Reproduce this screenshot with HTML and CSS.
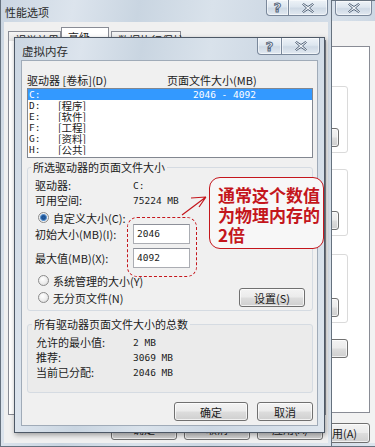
FILE: index.html
```html
<!DOCTYPE html>
<html lang="zh-CN">
<head>
<meta charset="utf-8">
<title>虚拟内存</title>
<link rel="stylesheet" href="styles.css">
</head>
<body>
<div class="screen">

  <section class="win win-sys">
    <div class="caption">
      <div class="cap-btns">
        <span class="cap-btn cap-close solo"><svg class="xg" width="12" height="10" viewBox="0 0 12 10"><path d="M0.5 1.5 L1.5 0.5 L6 3.5 L10.5 0.5 L11.5 1.5 L7.5 5 L11.5 8.5 L10.5 9.5 L6 6.5 L1.5 9.5 L0.5 8.5 L4.5 5 Z"/></svg></span>
      </div>
    </div>
    <div class="client sys-client">
      <div class="sys-panel">
        <div class="sys-group g1"><span class="btn b-set">设置(S)...</span></div>
        <div class="sys-group g2"><span class="btn b-set">设置(E)...</span></div>
        <div class="sys-group g3"><span class="btn b-set">设置(T)...</span></div>
        <div class="sys-env"><span class="btn b-env">环境变量(N)...</span></div>
      </div>
      <div class="sys-foot"><span class="btn b-apply">应用(A)</span></div>
    </div>
  </section>

  <section class="win win-perf">
    <div class="caption">
      <span class="cap-title">性能选项</span>
      <div class="cap-btns">
        <span class="cap-btn cap-help">?</span>
        <span class="cap-btn cap-close"><svg class="xg" width="12" height="10" viewBox="0 0 12 10"><path d="M0.5 1.5 L1.5 0.5 L6 3.5 L10.5 0.5 L11.5 1.5 L7.5 5 L11.5 8.5 L10.5 9.5 L6 6.5 L1.5 9.5 L0.5 8.5 L4.5 5 Z"/></svg></span>
      </div>
    </div>
    <div class="client perf-client">
      <div class="tabs">
        <span class="tab t1">视觉效果</span>
        <span class="tab t2 active">高级</span>
        <span class="tab t3">数据执行保护</span>
      </div>
      <div class="perf-panel"></div>
      <div class="perf-foot">
        <span class="btn b-perf">确定</span>
        <span class="btn b-perf">取消</span>
        <span class="btn b-perf">应用(A)</span>
      </div>
    </div>
  </section>

  <section class="win win-vm">
    <div class="caption">
      <span class="cap-title">虚拟内存</span>
      <div class="cap-btns">
        <span class="cap-btn cap-help">?</span>
        <span class="cap-btn cap-close"><svg class="xg" width="12" height="10" viewBox="0 0 12 10"><path d="M0.5 1.5 L1.5 0.5 L6 3.5 L10.5 0.5 L11.5 1.5 L7.5 5 L11.5 8.5 L10.5 9.5 L6 6.5 L1.5 9.5 L0.5 8.5 L4.5 5 Z"/></svg></span>
      </div>
    </div>
    <div class="client vm-client">
      <div class="list-head"><span class="lh1">驱动器 [卷标](D)</span><span>页面文件大小(MB)</span></div>
      <div class="drive-list">
        <div class="drive sel"><span class="d-letter num">C:</span><span class="d-label"></span><span class="d-size num">2046 - 4092</span></div>
        <div class="drive"><span class="d-letter num">D:</span><span class="d-label">[程序]</span><span class="d-size"></span></div>
        <div class="drive"><span class="d-letter num">E:</span><span class="d-label">[软件]</span><span class="d-size"></span></div>
        <div class="drive"><span class="d-letter num">F:</span><span class="d-label">[工程]</span><span class="d-size"></span></div>
        <div class="drive"><span class="d-letter num">G:</span><span class="d-label">[资料]</span><span class="d-size"></span></div>
        <div class="drive"><span class="d-letter num">H:</span><span class="d-label">[公共]</span><span class="d-size"></span></div>
      </div>

      <div class="group g-sel">
        <div class="group-title">所选驱动器的页面文件大小</div>
        <div class="kv info i1"><span class="k">驱动器:</span><span class="v num">C:</span></div>
        <div class="kv info i2"><span class="k">可用空间:</span><span class="v num">75224 MB</span></div>
        <div class="radio-row rr1"><span class="radio on"></span><span>自定义大小(C):</span></div>
        <div class="kv field f1"><span class="k">初始大小(MB)(I):</span><span class="input num">2046</span></div>
        <div class="kv field f2"><span class="k">最大值(MB)(X):</span><span class="input num">4092</span></div>
        <div class="radio-row rr2"><span class="radio"></span><span>系统管理的大小(Y)</span></div>
        <div class="radio-row rr3">
          <div class="radio-label"><span class="radio"></span><span>无分页文件(N)</span></div>
          <span class="btn b-set2">设置(S)</span>
        </div>
      </div>

      <div class="group g-total">
        <div class="group-title">所有驱动器页面文件大小的总数</div>
        <div class="kv tot t-first"><span class="k">允许的最小值:</span><span class="v num">2 MB</span></div>
        <div class="kv tot"><span class="k">推荐:</span><span class="v num">3069 MB</span></div>
        <div class="kv tot"><span class="k">当前已分配:</span><span class="v num">2046 MB</span></div>
      </div>

      <div class="vm-foot">
        <span class="btn b-ok">确定</span>
        <span class="btn b-cancel">取消</span>
      </div>
    </div>
  </section>

  <div class="mark-box"></div>
  <svg class="arrow" width="34" height="30" viewBox="0 0 34 30">
    <path d="M3 25 L27 7 M27 7 L12 8 M27 7 L20 17"/>
  </svg>
  <div class="note">通常这个数值<br>为物理内存的<br>2倍</div>

</div>
</body>
</html>
```

FILE: styles.css
```css
* { box-sizing: border-box; }
html, body { margin: 0; padding: 0; }
body {
  font-family: "Noto Sans CJK SC", "Noto Sans", sans-serif;
  font-size: 11px;
  color: #1b1b1b;
  background: #cdd8e4;
}
.screen {
  position: relative;
  width: 375px;
  height: 447px;
  overflow: hidden;
}

.num {
  font-family: "DejaVu Sans Mono", "Liberation Mono", monospace;
  font-size: 9.5px;
}

/* ---------- window chrome ---------- */
.win {
  position: absolute;
  display: flex;
  flex-direction: column;
  border: 1px solid #66727f;
  background: linear-gradient(100deg, #cbd6e2 0%, #dce4ed 18%, #c9d5e1 34%, #d9e2eb 52%, #ccd7e3 70%, #dee6ee 100%);
}
.caption {
  display: flex;
  justify-content: space-between;
  align-items: flex-start;
  flex: none;
}
.cap-title {
  line-height: 13px;
  color: #2b2b2b;
  white-space: nowrap;
}
.cap-btns { display: flex; }
.cap-btn {
  display: flex;
  align-items: center;
  justify-content: center;
  border: 1px solid #7a889b;
  border-top: 0;
  background: linear-gradient(#eef3f8, #dde6ef 45%, #ced9e5 55%, #e2e9f1);
  box-shadow: inset 0 0 0 1px rgba(255, 255, 255, 0.55);
}
.cap-help {
  border-radius: 0 0 0 4px;
  font: bold 13px "DejaVu Sans", sans-serif;
  color: #f2f5f8;
  -webkit-text-stroke: 1px #56667b;
}
.cap-close { border-left: 0; border-radius: 0 0 4px 0; }
.cap-close.solo { border-left: 1px solid #7a889b; border-radius: 0 0 4px 4px; }
.xg path { fill: #eef2f6; stroke: #56667b; stroke-width: 1; }

.btn {
  display: inline-flex;
  align-items: center;
  justify-content: center;
  border: 1px solid #707070;
  border-radius: 3px;
  background: linear-gradient(#f3f3f3 0%, #ebebeb 48%, #dddddd 52%, #cfcfcf 100%);
  box-shadow: inset 0 0 0 1px rgba(255, 255, 255, 0.7);
  white-space: nowrap;
  line-height: 12px;
  flex: none;
}

/* ---------- back window (system properties) ---------- */
.win-sys { left: 200px; top: 0; width: 180px; height: 447px; }
.win-sys .caption { height: 20px; justify-content: flex-end; padding-right: 7px; }
.win-sys .cap-close { width: 37px; height: 15px; }
.sys-client {
  flex: 1;
  margin: 0 3px 3px;
  background: #f2f2f2;
  display: flex;
  flex-direction: column;
}
.sys-panel {
  margin: 25px 6px 0 4px;
  height: 367px;
  background: #fff;
  border: 1px solid #898c95;
  padding: 0 21px 0 10px;
}
.sys-group {
  display: flex;
  justify-content: flex-end;
  align-items: flex-end;
  border: 1px solid #dadada;
  border-radius: 3px;
  padding: 0 8px 5px 0;
}
.g1 { margin-top: 39px; height: 67px; }
.g2 { margin-top: 16px; height: 67px; }
.g3 { margin-top: 18px; height: 69px; }
.b-set { width: 75px; height: 19px; }
.sys-env { display: flex; justify-content: flex-end; margin-top: 16px; }
.b-env { width: 100px; height: 19px; }
.sys-foot { display: flex; justify-content: flex-end; padding-right: 6px; margin-top: 10px; }
.b-apply { width: 62px; height: 20px; }

/* ---------- performance options ---------- */
.win-perf { left: 0; top: -1px; width: 332px; height: 448px; }
.win-perf .caption { height: 22px; padding-right: 3px; }
.win-perf .cap-title { padding: 6px 0 0 4px; }
.win-perf .cap-help { width: 23px; height: 16px; }
.win-perf .cap-close { width: 39px; height: 16px; }
.perf-client {
  flex: 1;
  margin: 0 3px 3px;
  background: #f0f0f0;
  display: flex;
  flex-direction: column;
}
.tabs {
  display: flex;
  align-items: flex-end;
  height: 18px;
  padding-left: 4px;
  position: relative;
  z-index: 1;
}
.tab {
  height: 10px;
  margin-bottom: -1px;
  border: 1px solid #898c95;
  border-bottom: 0;
  background: linear-gradient(#f5f5f5, #e4e4e4);
  padding: 1px 6px 0;
  line-height: 14px;
  white-space: nowrap;
}
.t1 { width: 53px; }
.t2 { width: 48px; height: 14px; background: #fff; padding-top: 2px; }
.t3 { width: 70px; margin-left: 2px; }
.perf-panel {
  margin: 0 2px 0 4px;
  height: 375px;
  background: #fff;
  border: 1px solid #898c95;
}
.perf-foot {
  display: flex;
  justify-content: flex-end;
  gap: 7px;
  padding-right: 5px;
  margin-top: 3px;
}
.b-perf { width: 66px; height: 22px; }

/* ---------- virtual memory dialog ---------- */
.win-vm {
  left: 14px;
  top: 37px;
  width: 311px;
  height: 396px;
  border-color: #4d5866;
  box-shadow: 1px 2px 5px rgba(0, 0, 0, 0.35);
  z-index: 2;
}
.win-vm .caption { height: 22px; padding-right: 4px; }
.win-vm .cap-title { padding: 7px 0 0 7px; font-size: 11.5px; }
.win-vm .cap-help { width: 25px; height: 17px; }
.win-vm .cap-close { width: 38px; height: 17px; }
.vm-client {
  flex: 1;
  margin: 0 6px 6px;
  background: #f0f0f0;
  border: 1px solid #a0abb8;
  padding: 0 4px 0 5px;
  display: flex;
  flex-direction: column;
}
.list-head { display: flex; margin-top: 13px; height: 12px; line-height: 12px; white-space: nowrap; }
.lh1 { width: 140px; }
.drive-list {
  margin-top: 2px;
  height: 70px;
  background: #fff;
  border: 1px solid #828790;
}
.drive {
  display: flex;
  height: 11px;
  line-height: 11px;
  font-size: 10.5px;
  white-space: nowrap;
  overflow: hidden;
}
.drive.sel { background: #3399ff; color: #fff; }
.d-letter { width: 30px; padding-left: 1px; }
.d-label { width: 135px; }

.group { border: 1px solid #d5dbe2; border-radius: 3px; }
.group-title {
  width: max-content;
  margin: -7px 0 0 -4px;
  padding: 0 2px;
  line-height: 12px;
  background: #f0f0f0;
}
.g-sel { margin-top: 9px; padding: 0 7px 3px; }
.kv { display: flex; align-items: center; white-space: nowrap; }
.kv .k { width: 98px; flex: none; }
.info { height: 14px; }
.i1 { margin-top: 5px; }
.i2 { margin-top: 1px; }
.radio-row { display: flex; align-items: center; height: 13px; padding-left: 3px; white-space: nowrap; }
.rr1 { margin-top: 4px; }
.field { height: 20px; }
.f2 { margin-top: 4px; }
.rr2 { margin-top: 6px; }
.rr3 { margin-top: 1px; height: 19px; justify-content: space-between; padding-left: 3px; }
.radio-label { display: flex; align-items: center; }
.radio {
  width: 11px;
  height: 11px;
  margin-right: 4px;
  flex: none;
  border-radius: 50%;
  border: 1px solid #8b8b8b;
  background: radial-gradient(circle at 40% 35%, #ffffff 0, #ececec 55%, #d2d2d2 100%);
}
.radio.on {
  background: radial-gradient(circle at 50% 50%, #1f5fab 0, #1a4d8c 1.8px, #6a9fd8 3.2px, #f3f3f3 3.9px, #dcdcdc 100%);
}
.input {
  width: 57px;
  height: 20px;
  background: #fff;
  border: 1px solid #abadb3;
  border-top-color: #8d9099;
  padding-left: 3px;
  line-height: 18px;
}
.b-set2 { width: 66px; height: 19px; }

.g-total { margin-top: 13px; padding: 0 8px 12px; background: #ebebeb; }
.g-total .k { width: 97px; }
.tot { height: 15px; line-height: 15px; }
.t-first { margin-top: 5px; }

.vm-foot { display: flex; justify-content: flex-end; gap: 9px; margin-top: 9px; }
.b-ok { width: 74px; height: 19px; }
.b-cancel { width: 56px; height: 19px; }

/* ---------- annotations ---------- */
.mark-box {
  position: absolute;
  left: 127px;
  top: 217px;
  width: 70px;
  height: 60px;
  border: 1px dashed #c4161c;
  border-radius: 10px;
  z-index: 3;
}
.arrow {
  position: absolute;
  left: 179px;
  top: 190px;
  z-index: 3;
}
.arrow path { fill: none; stroke: #c4161c; stroke-width: 1.2; }
.note {
  position: absolute;
  left: 209px;
  top: 177px;
  width: 115px;
  height: 72px;
  border: 1px solid #c4161c;
  border-radius: 11px;
  background: #f7f7f7;
  padding: 7px 0 0 8px;
  color: #c4161c;
  font-weight: 700;
  font-size: 17px;
  line-height: 20px;
  white-space: nowrap;
  z-index: 3;
}
```
